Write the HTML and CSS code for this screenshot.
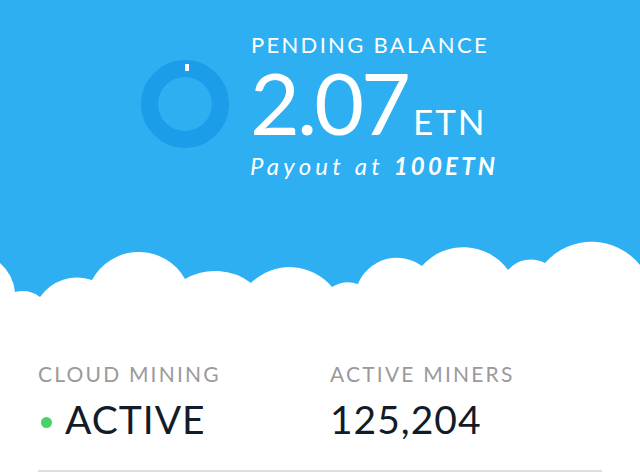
FILE: index.html
```html
<!DOCTYPE html>
<html lang="en">
<head>
<meta charset="utf-8">
<title>Pending balance</title>
<link rel="stylesheet" href="styles.css">
</head>
<body>
<div class="hero">
  <div class="hero-top">
    <svg class="donut" width="90" height="90" viewBox="0 0 90 90" aria-hidden="true">
      <circle cx="45" cy="45" r="35.5" fill="none" stroke="#1b9de9" stroke-width="17"/>
      <rect x="45" y="5" width="4" height="7" fill="#ffffff"/>
    </svg>
    <div class="balance">
      <div class="balance-label">PENDING BALANCE</div>
      <div class="balance-amount"><span class="amount-num">2.07</span><span class="amount-unit">ETN</span></div>
      <div class="balance-payout">Payout at <b>100ETN</b></div>
    </div>
  </div>
  <svg class="clouds" width="640" height="60" viewBox="0 0 640 60" aria-hidden="true">
    <path fill="#ffffff" d="M0 23 A45 45 0 0 1 15 52 A30 30 0 0 1 40 57 A45 45 0 0 1 92 40 A53 53 0 0 1 185 39 A60 60 0 0 1 251 43 A55 55 0 0 1 332 47 A30 30 0 0 1 358 44 A42 42 0 0 1 422 26 A55 55 0 0 1 508 30 A30 30 0 0 1 545 23 A62 62 0 0 1 640 25 L640 60 L0 60 Z"/>
  </svg>
</div>
<div class="stats">
  <div class="stat stat-first">
    <div class="stat-label">CLOUD MINING</div>
    <div class="stat-value"><span class="dot"></span>ACTIVE</div>
  </div>
  <div class="stat">
    <div class="stat-label">ACTIVE MINERS</div>
    <div class="stat-value">125,204</div>
  </div>
</div>
<div class="divider"></div>
</body>
</html>
```
FILE: styles.css
```css
html, body {
  margin: 0;
  padding: 0;
  background: #ffffff;
  font-family: "Lato", "Open Sans", sans-serif;
}
body {
  width: 640px;
  height: 475px;
  overflow: hidden;
}
.hero {
  background: #2daff1;
}
.hero-top {
  height: 240px;
  box-sizing: border-box;
  padding: 34px 0 0 140px;
  display: flex;
  align-items: flex-start;
  gap: 20px;
}
.donut {
  display: block;
  margin-top: 25px;
  flex: none;
}
.balance {
  color: #ffffff;
}
.balance-label {
  font-size: 22px;
  line-height: 22px;
  letter-spacing: 2.3px;
  margin-left: 1px;
}
.balance-amount {
  margin-top: 14px;
  display: flex;
  align-items: baseline;
}
.amount-num {
  font-size: 86px;
  line-height: 64px;
  letter-spacing: -3px;
}
.amount-unit {
  font-size: 35px;
  line-height: 35px;
  letter-spacing: 2px;
  margin-left: 5px;
}
.balance-payout {
  margin-top: 15px;
  font-size: 24px;
  line-height: 23px;
  font-style: italic;
  letter-spacing: 4.2px;
}
.balance-payout b {
  font-weight: 700;
  letter-spacing: 3.2px;
}
.clouds {
  display: block;
}
.stats {
  display: grid;
  grid-template-columns: 292px 1fr;
  padding: 63px 0 0 38px;
}
.stat-label {
  font-size: 21px;
  line-height: 21px;
  color: #9a9a9a;
  letter-spacing: 2.2px;
}
.stat-value {
  margin-top: 16px;
  display: flex;
  align-items: center;
  font-size: 39px;
  line-height: 39px;
  color: #121c28;
  letter-spacing: 1px;
}
.dot {
  width: 11px;
  height: 11px;
  border-radius: 50%;
  background: #45d36a;
  margin: 6px 13px 0 3px;
  flex: none;
}
.divider {
  margin: 31px 38px 0 38px;
  height: 2px;
  background: #dedede;
}
```
